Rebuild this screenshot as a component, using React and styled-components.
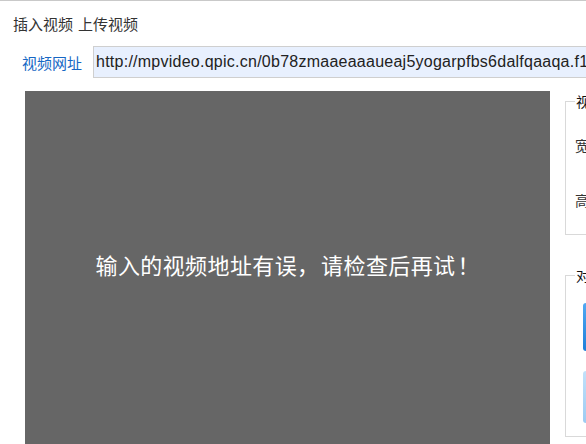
import React from 'react';
import styled, { createGlobalStyle } from 'styled-components';

const GlobalStyle = createGlobalStyle`
  html, body {
    margin: 0;
    padding: 0;
    background: #fff;
    font-family: "Liberation Sans", "Noto Sans CJK SC", sans-serif;
    overflow: hidden;
  }
`;

const Dialog = styled.div`
  width: 586px;
  height: 444px;
  border-top: 1px solid #c9c9c9;
  box-sizing: border-box;
  overflow: hidden;
`;

const Tabs = styled.div`
  display: flex;
  gap: 5px;
  padding: 14px 0 0 13px;
  height: 20px;
  font-size: 15px;
  line-height: 20px;
  color: #333;
`;

const Tab = styled.span`
  cursor: pointer;
`;

const UrlRow = styled.div`
  display: flex;
  align-items: center;
  margin-top: 11px;
  padding-left: 22px;
  gap: 11px;
`;

const Label = styled.label`
  font-size: 15px;
  color: #1667c4;
  white-space: nowrap;
`;

const UrlInput = styled.input`
  flex: 0 0 auto;
  width: 560px;
  height: 32px;
  box-sizing: border-box;
  border: 1px solid #cfcfcf;
  background: #e8f0fe;
  padding: 0 2px;
  font-family: "Liberation Sans", Arial, sans-serif;
  font-size: 16px;
  letter-spacing: 0.25px;
  color: #222;
  outline: none;
`;

const Body = styled.div`
  display: flex;
  gap: 15px;
  margin-top: 13px;
  padding-left: 25px;
`;

const Preview = styled.div`
  flex: 0 0 525px;
  height: 360px;
  background: #666666;
  color: #fff;
  font-family: "Noto Sans CJK SC", sans-serif;
  font-size: 22px;
  letter-spacing: 0.4px;
  text-align: center;
  padding-top: 157px;
  box-sizing: border-box;
`;

const Punct = styled.span`
  display: inline-block;
  width: 24px;
  text-align: ${({ align }) => align};
  letter-spacing: 0;
`;

const Side = styled.div`
  flex: 0 0 160px;
  display: flex;
  flex-direction: column;
  gap: 30px;
`;

const Group = styled.fieldset`
  margin: 0;
  padding: 0 0 0 9px;
  border: 1px solid #d9d9d9;
  height: ${({ h }) => h}px;
  box-sizing: border-box;
  font-size: 14px;
  color: #333;
`;

const Legend = styled.legend`
  padding: 0 1px;
  font-size: 14px;
  color: #111;
`;

const Field = styled.div`
  margin-top: ${({ top }) => top}px;
  height: 16px;
  line-height: 16px;
`;

const AlignButton = styled.div`
  width: 60px;
  height: ${({ h }) => h}px;
  margin: ${({ top }) => top}px 0 0 8px;
  border-radius: 3px;
  background: ${({ light }) =>
    light ? 'linear-gradient(#c2e1fa, #9ccbf2)' : 'linear-gradient(#52a9f2, #1f7fd9)'};
`;

export default function App() {
  return (
    <Dialog>
      <GlobalStyle />
      <Tabs>
        <Tab>插入视频</Tab>
        <Tab>上传视频</Tab>
      </Tabs>
      <UrlRow>
        <Label>视频网址</Label>
        <UrlInput
          readOnly
          value="http://mpvideo.qpic.cn/0b78zmaaeaaaueaj5yogarpfbs6dalfqaaqa.f10002.mp4"
        />
      </UrlRow>
      <Body>
        <Preview>
          输入的视频地址有误<Punct align="left">，</Punct>请检查后再试
          <Punct align="right">！</Punct>
        </Preview>
        <Side>
          <Group h={144}>
            <Legend>视频尺寸</Legend>
            <Field top={27}>宽度</Field>
            <Field top={39}>高度</Field>
          </Group>
          <Group h={172}>
            <Legend>对齐方式</Legend>
            <AlignButton h={48} top={18} />
            <AlignButton h={52} top={20} light />
          </Group>
        </Side>
      </Body>
    </Dialog>
  );
}
